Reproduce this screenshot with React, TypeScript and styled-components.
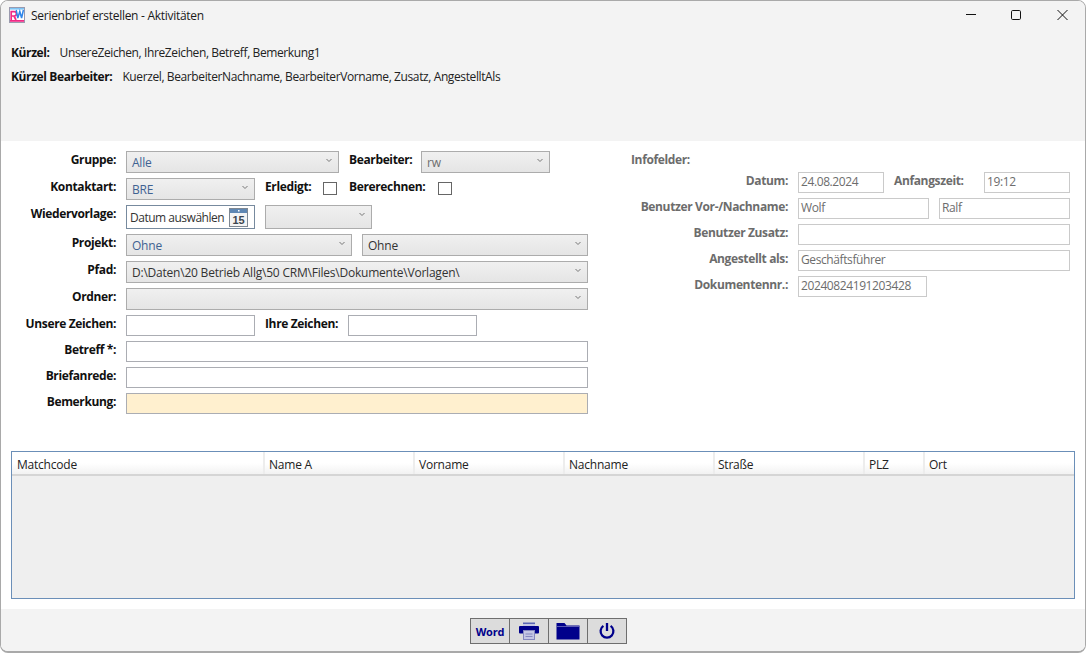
import React from "react";
import styled, { createGlobalStyle } from "styled-components";

const Global = createGlobalStyle`
  html, body { margin: 0; padding: 0; background: #fff; }
  body { font-family: "Open Sans", "Noto Sans", "Liberation Sans", sans-serif; font-size: 12px; letter-spacing: -0.22px; }
  * { box-sizing: border-box; }
`;

const Window = styled.div`
  position: relative; width: 1086px; height: 653px; overflow: hidden; background: #fff;
  border: 1px solid #a9a9a9; border-bottom-width: 2px; border-radius: 8px;
`;
const TitleArea = styled.header`
  position: absolute; left: 0; top: 0; right: 0; height: 140px; background: #f3f3f3;
`;
const TitleText = styled.div`
  position: absolute; left: 30px; top: 7px; color: #1a1a1a; line-height: 16px; letter-spacing: -0.28px;
`;
const Logo = styled.svg`position: absolute; left: 8px; top: 6px;`;
const WinBtn = styled.svg<{ $x: number }>`position: absolute; left: ${p => p.$x}px; top: 8px;`;
const Info = styled.div<{ $top: number }>`
  position: absolute; left: 10px; top: ${p => p.$top}px; line-height: 16px; color: #222; white-space: nowrap; letter-spacing: -0.39px;
  b { font-weight: 700; color: #111; margin-right: 10px; }
`;
const Row = styled.div<{ $top: number; $h?: number }>`
  position: absolute; left: 0; top: ${p => p.$top - 1}px; height: ${p => p.$h ?? 22}px; display: flex; white-space: nowrap;
`;
const Label = styled.label<{ $w?: number; $gap?: number; $muted?: boolean; $right?: boolean; $indent?: number }>`
  display: block; font-weight: 700; line-height: 16px; height: 16px; margin-top: 1px; letter-spacing: -0.36px;
  margin-left: ${p => p.$indent ?? 0}px;
  width: ${p => p.$w ?? 115}px; margin-right: ${p => p.$gap ?? 10}px; text-align: ${p => p.$right === false ? "left" : "right"};
  color: ${p => p.$muted ? "#6c6c6c" : "#111"}; flex: none;
`;
const Combo = styled.div<{ $w: number; $gap?: number; $color?: string; $h?: number }>`
  position: relative; flex: none; width: ${p => p.$w}px; height: ${p => p.$h ?? 22}px; margin-right: ${p => p.$gap ?? 10}px;
  border: 1px solid #acacac; background: linear-gradient(#f0f0f0, #e5e5e5);
  color: ${p => p.$color ?? "#3f6292"}; padding: 3px 5px; line-height: 16px;
`;
const Chevron = styled.svg`position: absolute; right: 6px; top: 6px;`;
const DateBox = styled.div`
  position: relative; flex: none; width: 129px; height: 24px; margin-right: 10px; border: 1px solid #778a9e; background: #fff;
  color: #333; padding: 3px 3px; line-height: 17px; letter-spacing: -0.49px;
`;
const CalIcon = styled.svg`position: absolute; right: 6px; top: 2px;`;
const Check = styled.span<{ $gap?: number }>`
  flex: none; width: 14px; height: 13px; margin-top: 4px; border: 1px solid #666; background: #fff; margin-right: ${p => p.$gap ?? 12}px;
`;
const Input = styled.div<{ $w: number; $gap?: number; $bg?: string }>`
  flex: none; width: ${p => p.$w}px; height: 21px; margin-right: ${p => p.$gap ?? 10}px;
  border: 1px solid #abadb3; background: ${p => p.$bg ?? "#fff"};
`;
const ReadOnly = styled.div<{ $w: number; $gap?: number }>`
  flex: none; width: ${p => p.$w}px; height: 21px; margin-right: ${p => p.$gap ?? 10}px;
  border: 1px solid #cacaca; background: #fff; color: #6d6d6d; padding: 1px 2px; line-height: 16px; letter-spacing: -0.4px;
`;
const Grid = styled.section`
  position: absolute; left: 10px; top: 450px; width: 1064px; height: 148px; border: 1px solid #6b8fb8; background: #efefef;
`;
const GridHead = styled.div`
  display: flex; height: 24px; border-bottom: 2px solid #d5d5d5; background: linear-gradient(#fff 0 50%, #f2f2f2);
`;
const Col = styled.div<{ $w: number; $last?: boolean; $pad?: number }>`
  flex: none; width: ${p => p.$w}px; padding: 5px 0 0 ${p => p.$pad ?? 4}px; line-height: 16px; color: #222;
  border-right: ${p => p.$last ? "none" : "2px solid #ededed"};
`;
const Footer = styled.footer`
  position: absolute; left: 0; right: 0; top: 608px; bottom: 0; background: #f3f3f3;
`;
const Toolbar = styled.div`
  position: absolute; left: 469px; top: 9px; display: flex; height: 26px; border: 1px solid #6e6e6e; background: #dcdcdc;
`;
const ToolBtn = styled.div<{ $last?: boolean }>`
  width: ${p => p.$last ? 38 : 39}px; height: 24px; display: flex; align-items: center; justify-content: center;
  border-right: ${p => p.$last ? "none" : "1px solid #6e6e6e"};
  color: #00008b; font-weight: 700; font-size: 11px; letter-spacing: -0.2px;
`;

const Chev = () => (
  <Chevron width="6" height="6" viewBox="0 0 6 6"><path d="M0.5 1 L3 3.5 L5.5 1" fill="none" stroke="#777" strokeWidth="1" /></Chevron>
);

export default function App() {
  return (
    <>
      <Global />
      <Window>
        <TitleArea>
          <Logo width="16" height="16" viewBox="0 0 16 16">
            <rect x="0.5" y="0.5" width="15" height="15" fill="#ffffff" stroke="#9a9aae" />
            <rect x="1" y="1" width="14" height="1.6" fill="#7cc4f5" />
            <rect x="1" y="13" width="14" height="1.8" fill="#f02a86" />
            <path d="M2.2 13V4.6H5.2a2 2 0 0 1 0 4.4H2.2M5 9 7 13" fill="none" stroke="#f02a86" strokeWidth="1.7" />
            <path d="M7.2 3 8.8 11 10.8 4.5 12.6 11 14.4 3" fill="none" stroke="#2f86ea" strokeWidth="1.5" />
          </Logo>
          <TitleText>Serienbrief erstellen - Aktivitäten</TitleText>
          <WinBtn $x={964} width="12" height="12" viewBox="0 0 12 12"><path d="M1 5.5h10" stroke="#111" strokeWidth="1" /></WinBtn>
          <WinBtn $x={1009} width="12" height="12" viewBox="0 0 12 12"><rect x="1.5" y="1.5" width="9" height="9" rx="1.2" fill="none" stroke="#111" /></WinBtn>
          <WinBtn $x={1055} width="13" height="12" viewBox="0 0 13 12"><path d="M1.5 1 L11.5 11 M11.5 1 L1.5 11" stroke="#111" strokeWidth="1" /></WinBtn>
          <Info $top={44}><b>Kürzel:</b>UnsereZeichen, IhreZeichen, Betreff, Bemerkung1</Info>
          <Info $top={68}><b>Kürzel Bearbeiter:</b>Kuerzel, BearbeiterNachname, BearbeiterVorname, Zusatz, AngestelltAls</Info>
        </TitleArea>

        <Row $top={151}>
          <Label>Gruppe:</Label>
          <Combo $w={213}>Alle<Chev /></Combo>
          <Label $w={72} $right={false} $gap={0}>Bearbeiter:</Label>
          <Combo $w={129} $color="#6d6d6d">rw<Chev /></Combo>
        </Row>
        <Row $top={178}>
          <Label>Kontaktart:</Label>
          <Combo $w={129}>BRE<Chev /></Combo>
          <Label $w={58} $right={false} $gap={0}>Erledigt:</Label>
          <Check />
          <Label $w={89} $right={false} $gap={0}>Bererechnen:</Label>
          <Check />
        </Row>
        <Row $top={205} $h={24}>
          <Label>Wiedervorlage:</Label>
          <DateBox>
            Datum auswählen
            <CalIcon width="19" height="19" viewBox="0 0 19 19">
              <rect x="0.5" y="0.5" width="18" height="18" fill="#f4f4f4" stroke="#7d8792" />
              <rect x="1" y="1" width="17" height="4" fill="#5f87b3" />
              <rect x="9" y="2" width="1.5" height="1.5" fill="#fff" />
              <text x="9.5" y="16" textAnchor="middle" fontSize="11" fontWeight="700" fill="#3c4650" fontFamily="Liberation Sans, sans-serif" letterSpacing="0">15</text>
            </CalIcon>
          </DateBox>
          <Combo $w={107} $h={24} $color="#333"><Chev /></Combo>
        </Row>
        <Row $top={234}>
          <Label>Projekt:</Label>
          <Combo $w={226}>Ohne<Chev /></Combo>
          <Combo $w={226} $color="#333">Ohne<Chev /></Combo>
        </Row>
        <Row $top={261}>
          <Label>Pfad:</Label>
          <Combo $w={462} $color="#333">D:\Daten\20 Betrieb Allg\50 CRM\Files\Dokumente\Vorlagen\<Chev /></Combo>
        </Row>
        <Row $top={288}>
          <Label>Ordner:</Label>
          <Combo $w={462} $color="#333"><Chev /></Combo>
        </Row>
        <Row $top={315}>
          <Label>Unsere Zeichen:</Label>
          <Input $w={129} />
          <Label $w={83} $right={false} $gap={0}>Ihre Zeichen:</Label>
          <Input $w={129} />
        </Row>
        <Row $top={341}><Label>Betreff *:</Label><Input $w={462} /></Row>
        <Row $top={367}><Label>Briefanrede:</Label><Input $w={462} /></Row>
        <Row $top={393}><Label>Bemerkung:</Label><Input $w={462} $bg="#fff0cf" /></Row>

        <Row $top={151}><Label $muted $indent={630} $w={80} $right={false} $gap={0}>Infofelder:</Label></Row>
        <Row $top={172}>
          <Label $muted $w={787}>Datum:</Label>
          <ReadOnly $w={86}>24.08.2024</ReadOnly>
          <Label $muted $w={90} $right={false} $gap={0}>Anfangszeit:</Label>
          <ReadOnly $w={86}>19:12</ReadOnly>
        </Row>
        <Row $top={198}>
          <Label $muted $w={787}>Benutzer Vor-/Nachname:</Label>
          <ReadOnly $w={131}>Wolf</ReadOnly>
          <ReadOnly $w={131}>Ralf</ReadOnly>
        </Row>
        <Row $top={224}><Label $muted $w={787}>Benutzer Zusatz:</Label><ReadOnly $w={272} /></Row>
        <Row $top={250}><Label $muted $w={787}>Angestellt als:</Label><ReadOnly $w={272}>Geschäftsführer</ReadOnly></Row>
        <Row $top={276}><Label $muted $w={787}>Dokumentennr.:</Label><ReadOnly $w={129}>20240824191203428</ReadOnly></Row>

        <Grid>
          <GridHead>
            <Col $w={253} $pad={5}>Matchcode</Col>
            <Col $w={150}>Name A</Col>
            <Col $w={150}>Vorname</Col>
            <Col $w={150}>Nachname</Col>
            <Col $w={150} $pad={3}>Straße</Col>
            <Col $w={60}>PLZ</Col>
            <Col $w={150} $last>Ort</Col>
          </GridHead>
        </Grid>

        <Footer>
          <Toolbar>
            <ToolBtn>Word</ToolBtn>
            <ToolBtn>
              <svg width="20" height="18" viewBox="0 0 20 18">
                <rect x="4" y="0.5" width="12" height="1.5" fill="#5a66b5" />
                <rect x="4" y="2" width="12" height="2" fill="#c4c6e4" />
                <rect x="0" y="4" width="20" height="7.5" rx="1" fill="#00008b" />
                <rect x="4.5" y="8.5" width="11" height="9" fill="#c4c6e4" stroke="#8688bf" />
                <path d="M6.5 12h7M6.5 14.5h7" stroke="#8688bf" />
              </svg>
            </ToolBtn>
            <ToolBtn>
              <svg width="24" height="18" viewBox="0 0 24 18">
                <path d="M0.5 1h8l2 2.5h13V17.5H0.5z" fill="#00008b" />
                <path d="M1 4.5h22" stroke="#5a5ab5" strokeWidth="1" />
              </svg>
            </ToolBtn>
            <ToolBtn $last>
              <svg width="16" height="18" viewBox="0 0 16 18">
                <path d="M4.4 3.9a6.4 6.4 0 1 0 7.2 0" fill="none" stroke="#00008b" strokeWidth="2.3" />
                <path d="M8 1v8" stroke="#00008b" strokeWidth="2.3" />
              </svg>
            </ToolBtn>
          </Toolbar>
        </Footer>
      </Window>
    </>
  );
}
